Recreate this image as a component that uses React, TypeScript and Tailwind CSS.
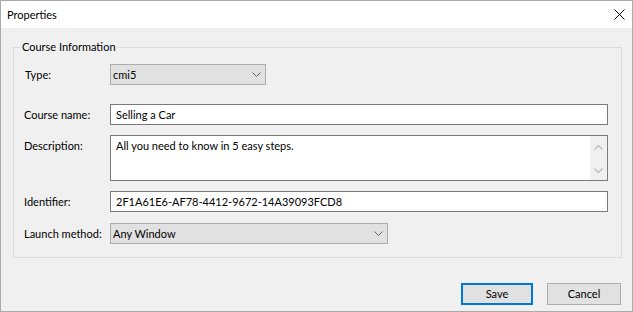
import React from "react";

const font = { fontFamily: "Lato, 'Noto Sans', sans-serif" };

function Chevron() {
  return (
    <svg width="9" height="5" viewBox="0 0 9 5" className="shrink-0">
      <path d="M0.5 0.5 L4.5 4.5 L8.5 0.5" fill="none" stroke="#606060" strokeWidth="1" />
    </svg>
  );
}

function Select({ value, width }: { value: string; width: string }) {
  return (
    <div
      className={`h-[21px] ${width} border border-[#adadad] bg-[#e1e1e1] flex items-center justify-between pl-[2px] pr-[4px] text-[11px] text-black`}
    >
      <span className="leading-[16px]">{value}</span>
      <Chevron />
    </div>
  );
}

function Input({ value }: { value: string }) {
  return (
    <div className="h-[21px] w-[498px] border border-[#7a7a7a] bg-white flex items-center pl-[5px] text-[11px] text-black">
      <span className="leading-[16px]">{value}</span>
    </div>
  );
}

function Label({ children, top }: { children: React.ReactNode; top?: boolean }) {
  return (
    <div
      className={`w-[86px] shrink-0 text-[11px] leading-[16px] text-black ${top ? "pt-[3px]" : ""}`}
    >
      {children}
    </div>
  );
}

export default function App() {
  return (
    <div
      className="w-[633px] h-[312px] border border-[#aaaaaa] bg-[#f0f0f0] flex flex-col"
      style={font}
    >
      <div className="h-[27px] bg-white flex items-center justify-between pl-[6px] pr-[7px]">
        <span className="text-[11px] leading-[16px] text-black">Properties</span>
        <svg width="11" height="11" viewBox="0 0 11 11">
          <path d="M0.5 0.5 L10.5 10.5 M10.5 0.5 L0.5 10.5" stroke="#000" strokeWidth="1" fill="none" />
        </svg>
      </div>
      <div className="flex flex-col pt-[19px] pl-[12px] pr-[10px]">
        <div className="relative border border-[#dcdcdc] pt-[16px] pb-[13px] pl-[10px] flex flex-col">
          <span className="absolute left-[7px] top-[-9px] px-[1px] bg-[#f0f0f0] text-[11px] leading-[16px] text-black">
            Course Information
          </span>
          <div className="flex items-center">
            <Label>
              <span className="pl-[1px]">Type:</span>
            </Label>
            <Select value="cmi5" width="w-[156px]" />
          </div>
          <div className="flex items-center mt-[19px]">
            <Label>Course name:</Label>
            <Input value="Selling a Car" />
          </div>
          <div className="flex items-start mt-[10px]">
            <Label top>Description:</Label>
            <div className="h-[46px] w-[498px] border border-[#7a7a7a] bg-white flex">
              <div className="flex-1 pl-[5px] pt-[2px] text-[11px] leading-[16px] text-black">
                All you need to know in 5 easy steps.
              </div>
              <div className="w-[17px] bg-[#f0f0f0] flex flex-col items-center justify-between pt-[9px] pb-[7px]">
                <svg width="9" height="5" viewBox="0 0 9 5">
                  <path d="M0.5 4.5 L4.5 0.5 L8.5 4.5" fill="none" stroke="#c0c0c0" strokeWidth="1.5" />
                </svg>
                <svg width="9" height="5" viewBox="0 0 9 5">
                  <path d="M0.5 0.5 L4.5 4.5 L8.5 0.5" fill="none" stroke="#c0c0c0" strokeWidth="1.5" />
                </svg>
              </div>
            </div>
          </div>
          <div className="flex items-center mt-[10px]">
            <Label>Identifier:</Label>
            <Input value="2F1A61E6-AF78-4412-9672-14A39093FCD8" />
          </div>
          <div className="flex items-center mt-[11px]">
            <Label>Launch method:</Label>
            <Select value="Any Window" width="w-[278px]" />
          </div>
        </div>
      </div>
      <div className="flex justify-end gap-[14px] mt-[25px] pr-[11px]">
        <button className="h-[22px] w-[72px] border-2 border-[#0078d7] bg-[#e1e1e1] text-[11px] leading-[16px] text-black flex items-center justify-center">
          Save
        </button>
        <button className="h-[22px] w-[74px] border border-[#adadad] bg-[#e1e1e1] text-[11px] leading-[16px] text-black flex items-center justify-center">
          Cancel
        </button>
      </div>
    </div>
  );
}
